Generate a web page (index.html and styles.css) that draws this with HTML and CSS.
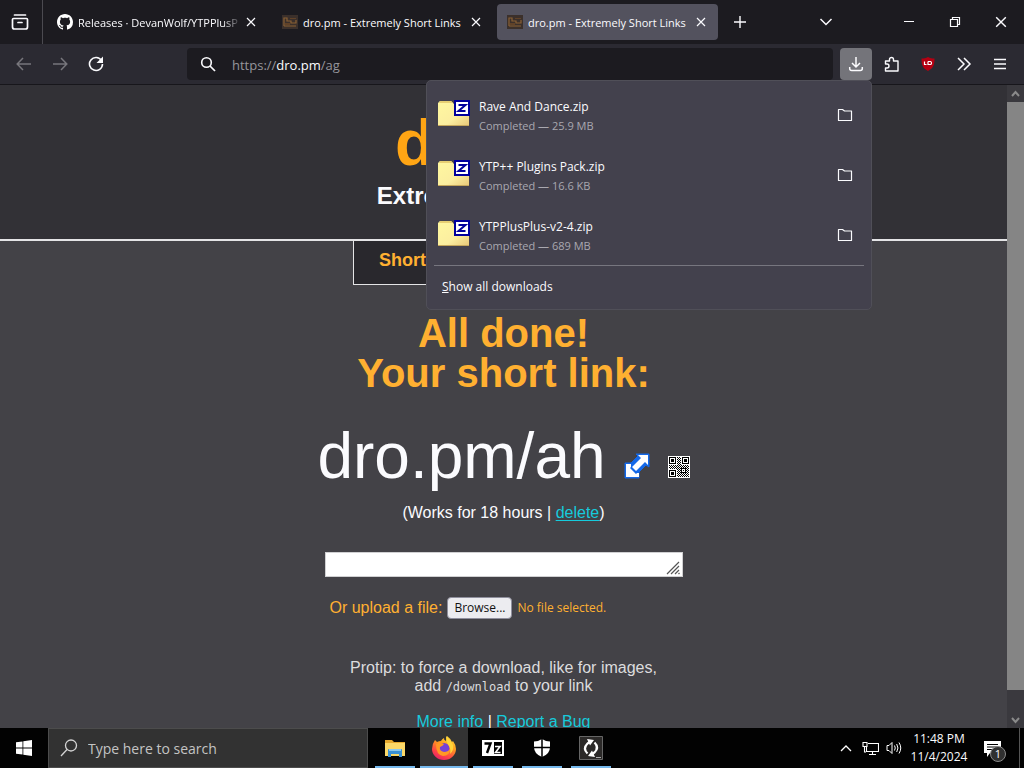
FILE: index.html
```html
<!DOCTYPE html>
<html lang="en">
<head>
<meta charset="utf-8">
<title>dro.pm - Extremely Short Links</title>
<link rel="stylesheet" href="styles.css">
</head>
<body>
<svg class="defs" aria-hidden="true">
  <defs>
    <symbol id="i-close" viewBox="0 0 10 10"><path d="M1 1l8 8M9 1l-8 8" fill="none" stroke="currentColor" stroke-width="1.2"/></symbol>
    <symbol id="i-favicon" viewBox="0 0 16 16"><path fill="#3b302b" d="M0 1h16v14H0z"/><path d="M2 12V4h3v3h4v2h5V6M2 12h12" fill="none" stroke="#8a6034" stroke-width="1.2"/><path fill="#604228" d="M3 9h5v2H3zM8 4h6v1H8z"/></symbol>
    <symbol id="i-folder" viewBox="0 0 16 16"><path d="M1.500 2.500h4l2 1.500h7v9.500h-13z" fill="none" stroke="currentColor" stroke-width="1.200" stroke-linejoin="round"/></symbol>
    <linearGradient id="g-folder" x1="0" y1="0" x2="1" y2="1"><stop offset="0" stop-color="#fff8a0"/><stop offset=".6" stop-color="#fbeea0"/><stop offset="1" stop-color="#e8c878"/></linearGradient>
    <symbol id="i-zip" viewBox="0 2 32 32"><path fill="url(#g-folder)" d="M0 6l2-2h11l3 3h15v22H0z"/><path fill="#e7cf73" d="M2 4h11l2 2H1z"/><path fill="#c4a75c" d="M0 28h31v1H0z"/><path fill="#00009c" d="M16 3h16v16H16z"/><path fill="#fff" d="M18 5h12v12H18z"/><path d="M20.500 8h7l-7 6h7" fill="none" stroke="#00009c" stroke-width="2"/></symbol>
  </defs>
</svg>

<header class="tabs">
  <button class="view" aria-label="Recent browsing"><svg width="18" height="18" viewBox="0 0 18 18"><path d="M3.500 1.500h11M2.500 5h13q1 0 1 1v7.500q0 2-2 2h-11q-2 0-2-2V6q0-1 1-1zM7 9h4" transform="translate(0 .5)" fill="none" stroke="currentColor" stroke-width="1.700" stroke-linecap="round"/></svg></button>
  <div class="tab tab-first">
    <svg width="16" height="16" viewBox="0 0 16 16"><path fill="#fff" d="M8 0C3.580 0 0 3.580 0 8c0 3.540 2.290 6.530 5.470 7.590.4.070.55-.17.55-.38 0-.19-.01-.82-.01-1.490-2.010.37-2.530-.49-2.690-.94-.09-.23-.48-.94-.82-1.130-.28-.15-.68-.52-.01-.53.63-.01 1.080.58 1.230.82.72 1.210 1.870.87 2.330.66.070-.52.28-.87.51-1.070-1.780-.2-3.640-.89-3.640-3.950 0-.87.31-1.590.82-2.150-.08-.2-.36-1.020.080-2.120 0 0 .67-.21 2.200.82.64-.18 1.320-.27 2-.27s1.360.09 2 .27c1.530-1.040 2.200-.82 2.200-.82.44 1.100.16 1.920.080 2.120.51.56.82 1.270.82 2.150 0 3.070-1.870 3.750-3.650 3.950.29.25.54.73.54 1.480 0 1.070-.01 1.930-.01 2.200 0 .21.15.46.55.38A8 8 0 0 0 16 8c0-4.420-3.580-8-8-8z"/></svg>
    <span class="title fade">Releases · DevanWolf/YTPPlusP</span>
    <button aria-label="Close tab"><svg width="10" height="10"><use href="#i-close"/></svg></button>
  </div>
  <div class="tab">
    <svg width="16" height="16"><use href="#i-favicon"/></svg>
    <span class="title">dro.pm - Extremely Short Links</span>
    <button aria-label="Close tab"><svg width="10" height="10"><use href="#i-close"/></svg></button>
  </div>
  <div class="tab active">
    <svg width="16" height="16"><use href="#i-favicon"/></svg>
    <span class="title">dro.pm - Extremely Short Links</span>
    <button aria-label="Close tab"><svg width="10" height="10"><use href="#i-close"/></svg></button>
  </div>
  <button class="newtab" aria-label="New tab"><svg width="14" height="14" viewBox="0 0 14 14"><path d="M7 1v12M1 7h12" stroke="currentColor" stroke-width="1.400"/></svg></button>
  <div class="window">
    <button class="list" aria-label="List all tabs"><svg width="14" height="10" viewBox="0 0 14 10"><path d="M1.500 2L7 7.500 12.500 2" fill="none" stroke="currentColor" stroke-width="1.500"/></svg></button>
    <button aria-label="Minimize"><svg width="12" height="12" viewBox="0 0 12 12"><path d="M1 5.500h10" stroke="currentColor"/></svg></button>
    <button aria-label="Restore"><svg width="12" height="12" viewBox="0 0 12 12"><path d="M1.500 3.500h7v7h-7zM3.500 3V1.500h7v7H9" fill="none" stroke="currentColor" stroke-width="1.200"/></svg></button>
    <button aria-label="Close"><svg width="12" height="12"><use href="#i-close"/></svg></button>
  </div>
</header>

<nav class="toolbar">
  <button class="tool dim" aria-label="Back"><svg width="16" height="14" viewBox="0 0 16 14"><path d="M15 7H1.500M7 1L1.200 7 7 13" fill="none" stroke="currentColor" stroke-width="1.500"/></svg></button>
  <button class="tool dim" aria-label="Forward"><svg width="16" height="14" viewBox="0 0 16 14"><path d="M1 7h13.500M9 1l5.800 6L9 13" fill="none" stroke="currentColor" stroke-width="1.500"/></svg></button>
  <button class="tool" aria-label="Reload"><svg width="16" height="16" viewBox="0 0 16 16"><path d="M13.500 4.500A6.500 6.500 0 1 0 14.500 8" fill="none" stroke="currentColor" stroke-width="1.600"/><path d="M15 .5V7H8.500z" fill="currentColor"/></svg></button>
  <label class="url">
    <svg width="16" height="16" viewBox="0 0 16 16"><circle cx="6.500" cy="6.500" r="4.800" fill="none" stroke="currentColor" stroke-width="1.600"/><path d="M10 10l5 5" stroke="currentColor" stroke-width="1.700"/></svg>
    <span class="address" role="textbox" aria-label="Address" contenteditable="true" spellcheck="false">https://<b>dro.pm</b>/ag</span>
  </label>
  <div class="downloads">
    <button class="tool on" aria-label="Downloads"><svg width="16" height="16" viewBox="0 0 16 16"><path d="M8 1v9.500M4 7l4 4 4-4M1.700 11v1.500q0 2 2 2h8.600q2 0 2-2V11" fill="none" stroke="currentColor" stroke-width="1.500"/></svg></button>
    <section class="panel" aria-label="Downloads">
      <ul>
        <li>
          <svg width="32" height="32"><use href="#i-zip"/></svg>
          <div class="file"><span>Rave And Dance.zip</span><small>Completed — 25.9 MB</small></div>
          <button aria-label="Show in folder"><svg width="16" height="16"><use href="#i-folder"/></svg></button>
        </li>
        <li>
          <svg width="32" height="32"><use href="#i-zip"/></svg>
          <div class="file"><span>YTP++ Plugins Pack.zip</span><small>Completed — 16.6 KB</small></div>
          <button aria-label="Show in folder"><svg width="16" height="16"><use href="#i-folder"/></svg></button>
        </li>
        <li>
          <svg width="32" height="32"><use href="#i-zip"/></svg>
          <div class="file"><span>YTPPlusPlus-v2-4.zip</span><small>Completed — 689 MB</small></div>
          <button aria-label="Show in folder"><svg width="16" height="16"><use href="#i-folder"/></svg></button>
        </li>
      </ul>
      <button class="all"><u>S</u>how all downloads</button>
    </section>
  </div>
  <button class="tool" aria-label="Extensions"><svg width="16" height="16" viewBox="0 0 16 16"><path d="M1.500 5h4V3.500a2 2 0 0 1 4 0V5h4.500v10H1.500v-3h1.500a2 2 0 0 0 0-4H1.500z" fill="none" stroke="currentColor" stroke-width="1.400" stroke-linejoin="round"/></svg></button>
  <button class="tool" aria-label="uBlock Origin"><svg width="16" height="16" viewBox="0 0 16 16"><path fill="#b50012" d="M8 1c2 1.200 4 1.500 6.500 1.500 0 6.500-1 9.500-6.500 12.500C2.500 12 1.500 9 1.500 2.500 4 2.500 6 2.200 8 1z"/><path d="M4.500 5.500v3h2M8 5.500v3h2.500q1-.2 1-1.500t-1-1.500H8" fill="none" stroke="#fff" stroke-width="1.200"/></svg></button>
  <button class="tool" aria-label="More tools"><svg width="16" height="14" viewBox="0 0 16 14"><path d="M2 1l6 6-6 6M8 1l6 6-6 6" fill="none" stroke="currentColor" stroke-width="1.500"/></svg></button>
  <button class="tool" aria-label="Application menu"><svg width="14" height="12" viewBox="0 0 14 12"><path d="M1 1.500h12M1 6h12M1 10.500h12" stroke="currentColor" stroke-width="1.400"/></svg></button>
</nav>

<div class="viewport">
  <main class="page">
    <div class="banner">
      <h1>dro.pm</h1>
      <p>Extremely Short Links</p>
    </div>
    <div class="menu"><a href="#shorten">Shorten</a></div>
    <h2>All done!<br>Your short link:</h2>
    <div class="result">
      <span>dro.pm/ah</span>
      <a href="#open" aria-label="Open link"><svg width="28" height="28" viewBox="0 0 28 28"><path d="M2 12h6l7-7-2-2h13v13l-3-2-7 7v6H2z" fill="#1468e8" stroke="#1468e8" stroke-width="1" stroke-linejoin="round"/><path d="M3 13h5v3l-1 1 6 6 1-1h2v4H3z" fill="#fff"/><path d="M15 4h10v10l-3-3-9 9-4-4 9-9z" fill="#fff"/></svg></a>
      <a href="#qr" aria-label="QR code"><svg width="22" height="22" viewBox="0 0 22 22" shape-rendering="crispEdges"><defs><pattern id="qr" width="2" height="2" patternUnits="userSpaceOnUse"><path fill="#000" d="M0 0h1v1H0zM1 1h1v1H1z"/></pattern></defs><path fill="#fff" d="M0 0h22v22H0z"/><path fill="url(#qr)" d="M9 1h4v8h8v12H9v-8H1V9h8z"/><path d="M1.500 1.500h6v6h-6zM14.500 1.500h6v6h-6zM1.500 14.500h6v6h-6z" fill="none" stroke="#000"/><path d="M3 3h3v3H3zM16 3h3v3h-3zM3 16h3v3H3z"/><path fill="#fff" stroke="#000" d="M13.500 12.500h4v4h-4z"/><path d="M15 14h1v1h-1z"/></svg></a>
    </div>
    <p class="expiry">(Works for 18 hours | <a href="#delete">delete</a>)</p>
    <form class="form">
      <div class="box">
        <textarea rows="1" aria-label="Link or text to shorten"></textarea>
        <svg width="15" height="14" viewBox="0 0 15 14"><path d="M1 13L13 1M5 13l8-8M9 13l4-4M12.500 13l1-1" stroke="#555" stroke-width="1.200"/></svg>
      </div>
      <div class="upload"><label for="browse">Or upload a file:</label><button type="button" id="browse">Browse...</button><span>No file selected.</span></div>
    </form>
    <p class="tip">Protip: to force a download, like for images,<br>add <code>/download</code> to your link</p>
    <p class="links"><a href="#info">More info</a> | <a href="#bug">Report a Bug</a></p>
  </main>
  <div class="scrollbar" aria-hidden="true">
    <svg width="17" height="17" viewBox="0 0 17 17"><path d="M5 11l3.500-4 3.500 4" fill="none" stroke="#8a8a8a" stroke-width="2"/></svg>
    <div class="thumb"></div>
    <svg class="down" width="17" height="17" viewBox="0 0 17 17"><path d="M5 7l3.500 4L12 7" fill="none" stroke="#8a8a8a" stroke-width="2"/></svg>
  </div>
</div>

<footer class="taskbar">
  <button class="start" aria-label="Start"><svg width="16" height="16" viewBox="0 0 16 16"><path fill="#fff" d="M0 2.300L6.500 1.400v6.200H0zM7.300 1.300L16 0v7.600H7.300zM0 8.400h6.500v6.200L0 13.700zM7.300 8.400H16V16l-8.700-1.300z"/></svg></button>
  <label class="search">
    <svg width="18" height="18" viewBox="0 0 18 18"><circle cx="11" cy="6.500" r="5.500" fill="none" stroke="currentColor" stroke-width="1.300"/><path d="M7 10.500L1 17" stroke="currentColor" stroke-width="1.300"/></svg>
    <input type="text" placeholder="Type here to search" aria-label="Type here to search">
  </label>
  <div class="apps">
    <button aria-label="File Explorer"><svg width="24" height="24" viewBox="0 0 24 24"><path fill="#e5a82e" d="M2 4h7l2 2h11v3H2z"/><path fill="#fbd868" d="M2 7h20v13H2z"/><path fill="#3a91d4" d="M5 14q0-1 1-1h12q1 0 1 1v7h-3v-3H8v3H5z"/><path fill="#8cc9ee" d="M6 13h12v2H6z"/></svg></button>
    <button class="current" aria-label="Firefox"><svg width="26" height="26" viewBox="0 0 26 26"><defs><linearGradient id="ff" x1=".8" y1="0" x2=".3" y2="1"><stop offset="0" stop-color="#ffe23c"/><stop offset=".4" stop-color="#ff9a1f"/><stop offset=".75" stop-color="#ff4545"/><stop offset="1" stop-color="#e52268"/></linearGradient></defs><path fill="url(#ff)" d="M4 5q1 1 2 2 2-1 4-1 1-2 3-3-.500 2 2 3l1-5q4 3 5 6l1-1q3 4 3 8a12 11 0 0 1-24 0q0-5 3-9z"/><circle cx="13" cy="13.500" r="5.500" fill="#7740d8"/><path fill="#ff9824" d="M5 9q4-2 8 0-1 2-4 3-1 4 4 5 4 0 6-3 0 7-7 7-7-1-7-12z"/><path fill="#ffd43a" d="M15 1q5 4 7 9 1 6-3 9 1-5-1-8-3-4-3-10z"/></svg></button>
    <button aria-label="7-Zip"><svg width="22" height="16" viewBox="0 0 22 16"><path fill="#fff" d="M0 0h22v16H0z"/><path fill="#000" d="M12 2h8v12h-8z"/><path d="M2.500 3.500h6L5 13" fill="none" stroke="#000" stroke-width="2.400"/><path d="M13 6.500h5l-4.500 6h5" fill="none" stroke="#fff" stroke-width="1.600"/></svg></button>
    <button aria-label="Windows Security"><svg width="18" height="20" viewBox="0 0 18 20"><path fill="#fff" d="M9 1q4 2.500 8 2.500V9q0 7-8 10-8-3-8-10V3.500Q5 3.500 9 1z"/><path d="M9 1v18M1 9.500h16" stroke="#000" stroke-width="1.500"/></svg></button>
    <button aria-label="Converter"><svg width="24" height="24" viewBox="0 0 24 24"><path fill="#2b2928" stroke="#666" d="M.5.5h23v23H.5z"/><path d="M8.500 17.500q-5-5 0-10l2-1.500M15.500 6.500q5 5 0 10l-2 1.500" fill="none" stroke="#fff" stroke-width="2.200"/><path fill="#fff" d="M8 3l7 1-4 5.500zM16 21l-7-1 4-5.500z"/><path d="M17 21.500h5" fill="none" stroke="#aaa"/></svg></button>
  </div>
  <div class="tray">
    <button aria-label="Show hidden icons"><svg width="12" height="8" viewBox="0 0 12 8"><path d="M1 7l5-5 5 5" fill="none" stroke="#fff" stroke-width="1.300"/></svg></button>
    <button aria-label="Network"><svg width="17" height="15" viewBox="0 0 17 15"><path d="M6 2.500h10.500v8H4.500V6M10.500 10.500v3M7 13.500h7M1 1.500h4v4H1zM2.500 6v5H4" fill="none" stroke="#fff" stroke-width="1.100"/></svg></button>
    <button aria-label="Volume"><svg width="16" height="14" viewBox="0 0 16 14"><path d="M1 4.500h2l3-3v11l-3-3H1zM8.500 4.500q1.500 2.500 0 5M10.700 3q2.500 4 0 8M13 1.500q3.500 5.500 0 11" fill="none" stroke="#fff"/></svg></button>
    <time datetime="2024-11-04T23:48">11:48 PM<br>11/4/2024</time>
    <button class="note" aria-label="1 notification"><svg width="17" height="17" viewBox="0 0 17 17"><path fill="#fff" d="M0 1h17v12H6l-3 4v-4H0z"/><path d="M3 4.500h11M3 7h11M3 9.500h8" stroke="#000"/></svg><span>1</span></button>
    <div class="peek"></div>
  </div>
</footer>
</body>
</html>
```

FILE: styles.css
```css
* { box-sizing: border-box; }
body {
  margin: 0;
  height: 100vh;
  display: flex;
  flex-direction: column;
  overflow: hidden;
  background: #434247;
  color: #fbfbfe;
  font: 12px/18px "Open Sans", "Noto Sans", sans-serif;
}
button {
  display: flex;
  align-items: center;
  justify-content: center;
  padding: 0;
  border: 0;
  background: none;
  color: inherit;
  font: inherit;
}
svg { flex: none; display: block; }
.defs { position: absolute; width: 0; height: 0; }

/* Tab strip */
.tabs { display: flex; align-items: center; height: 44px; flex: none; background: #1c1b20; }
.view { width: 43px; height: 44px; padding-right: 3px; border-right: 1px solid #4b4a50; }
.tab { display: flex; align-items: center; width: 221px; height: 36px; margin-right: 4px; padding: 0 12px 0 10px; border-radius: 4px; }
.tab-first { width: 225px; padding-left: 14px; }
.tab.active { margin-right: 0; background: #53525e; }
.title { flex: 1; margin-left: 5px; padding-top: 1px; font-size: 11px; overflow: hidden; white-space: nowrap; }
.fade { mask-image: linear-gradient(to right, #000 88%, transparent); }
.tab button { flex: none; width: 10px; height: 20px; margin-left: 4px; }
.newtab { width: 44px; height: 44px; }
.window { display: flex; margin-left: auto; }
.window button { width: 46px; height: 44px; }
.window .list { width: 36px; margin-right: 42px; }

/* Toolbar */
.toolbar { display: flex; align-items: center; gap: 4px; height: 41px; flex: none; padding: 0 8px; background: #2b2a32; border-bottom: 1px solid #17161b; }
.tool { width: 32px; height: 32px; flex: none; border-radius: 4px; }
.dim { color: #77767c; }
.on { background: #74747a; }
.url { display: flex; align-items: center; flex: 1; height: 32px; gap: 16px; margin: 0 3px 0 71px; padding-left: 13px; border-radius: 4px; background: #1c1b20; }
.address { flex: 1; outline: 0; padding-top: 1px; color: #96959b; font-size: 13px; }
.address b { font-weight: 400; color: #fbfbfe; }

/* Downloads panel */
.downloads { position: relative; }
.panel { position: absolute; z-index: 5; top: 100%; right: 0; width: 446px; padding: 4px 7px 3px; background: #43414d; border: 1px solid #504f58; border-radius: 5px; }
.panel ul { margin: 0; padding: 0; list-style: none; border-bottom: 1px solid #77767f; }
.panel li { display: flex; align-items: center; gap: 9px; height: 60px; padding: 0 11px 0 4px; }
.file { display: flex; flex-direction: column; flex: 1; padding-top: 1px; line-height: 19px; }
.file small { color: #a9a8b0; font-size: 11px; }
.all { justify-content: flex-start; height: 40px; padding: 2px 0 0 8px; }

/* Page */
.viewport { display: flex; flex: 1; min-height: 0; }
.page { flex: 1; overflow: hidden; font: 16px/18px "Liberation Sans", Arial, sans-serif; text-align: center; }
.page p { margin: 0; }
.banner { height: 156px; padding-top: 22px; background: #323136; border-bottom: 2px solid #e4e4e6; }
.banner h1 { margin: 0 0 3px; color: #ffa514; font-size: 64px; line-height: 72px; }
.page .banner p { font-size: 24px; line-height: 28px; font-weight: bold; }
.menu { display: flex; width: 301px; height: 44px; margin: 0 auto; padding: 0 25px; align-items: center; background: #29282d; border: 1px solid #e4e4e6; border-top: 0; }
.menu a { color: #ffb031; font-size: 18px; font-weight: bold; text-decoration: none; padding-bottom: 5px; }
.page h2 { margin: 28px 0 0; color: #ffb031; font-size: 40px; line-height: 40px; }
.result { display: flex; justify-content: center; align-items: flex-end; height: 72px; margin-top: 27px; font-size: 64px; line-height: 72px; }
.result a { margin: 0 0 14px 17px; }
.result a:first-of-type { margin-bottom: 13px; }
.page .expiry { margin-top: 12px; }
.page a { text-underline-offset: 2px; }
.expiry a, .links a { color: #16cbdc; }
.form { width: 358px; margin: 30px auto 0; }
.box { position: relative; }
.box textarea { display: block; width: 100%; height: 25px; padding: 2px; border: 1px solid #d0d0d2; background: #fff; resize: none; }
.box svg { position: absolute; right: 2px; bottom: 2px; }
.upload { display: flex; align-items: center; margin-top: 20px; padding-left: 5px; color: #ffb031; }
.upload button { width: 65px; height: 22px; margin: 0 5px; border: 1px solid #8f8f9d; border-radius: 4px; background: #ececf0; color: #111; font: 12px/18px "Open Sans", sans-serif; }
.upload span { font: 12px/18px "Open Sans", sans-serif; }
.page .tip { margin-top: 40px; color: #dcdcde; }
.tip code { font: 12px/16px "DejaVu Sans Mono", monospace; }
.page .links { margin-top: 18px; }

/* Page scrollbar */
.scrollbar { display: flex; flex-direction: column; width: 17px; background: #3a393e; }
.thumb { flex: 1; background: #858585; margin-bottom: 21px; }

/* Taskbar */
.taskbar { display: flex; height: 40px; flex: none; background: #020202; }
.start { width: 48px; }
.search { display: flex; align-items: center; gap: 10px; width: 320px; padding-left: 11px; background: #323232; border: 1px solid #4c4c4c; color: #d4d4d4; }
.search input { flex: 1; min-width: 0; padding: 2px 0 0; border: 0; outline: 0; background: none; color: #fff; font: 14px/20px "Open Sans", sans-serif; }
.search input::placeholder { color: #c4c4c4; opacity: 1; }
.apps { display: flex; gap: 1px; padding-left: 3px; }
.apps button { width: 48px; background: linear-gradient(#76b9ed, #76b9ed) center bottom / 40px 2px no-repeat; }
.apps .current { background: linear-gradient(#76b9ed, #76b9ed) center bottom / 48px 2px no-repeat #333; }
.tray { display: flex; align-items: center; margin-left: auto; }
.tray button { width: 24px; height: 40px; }
.tray time { width: 66px; text-align: center; line-height: 18px; }
.tray .note { position: relative; width: 40px; }
.note span { position: absolute; left: 18px; top: 18px; width: 16px; height: 16px; border: 1px solid #8a8a8a; border-radius: 50%; background: #303030; font-size: 11px; line-height: 14px; }
.peek { width: 5px; height: 40px; margin-left: 7px; border-left: 1px solid #555; }
```
